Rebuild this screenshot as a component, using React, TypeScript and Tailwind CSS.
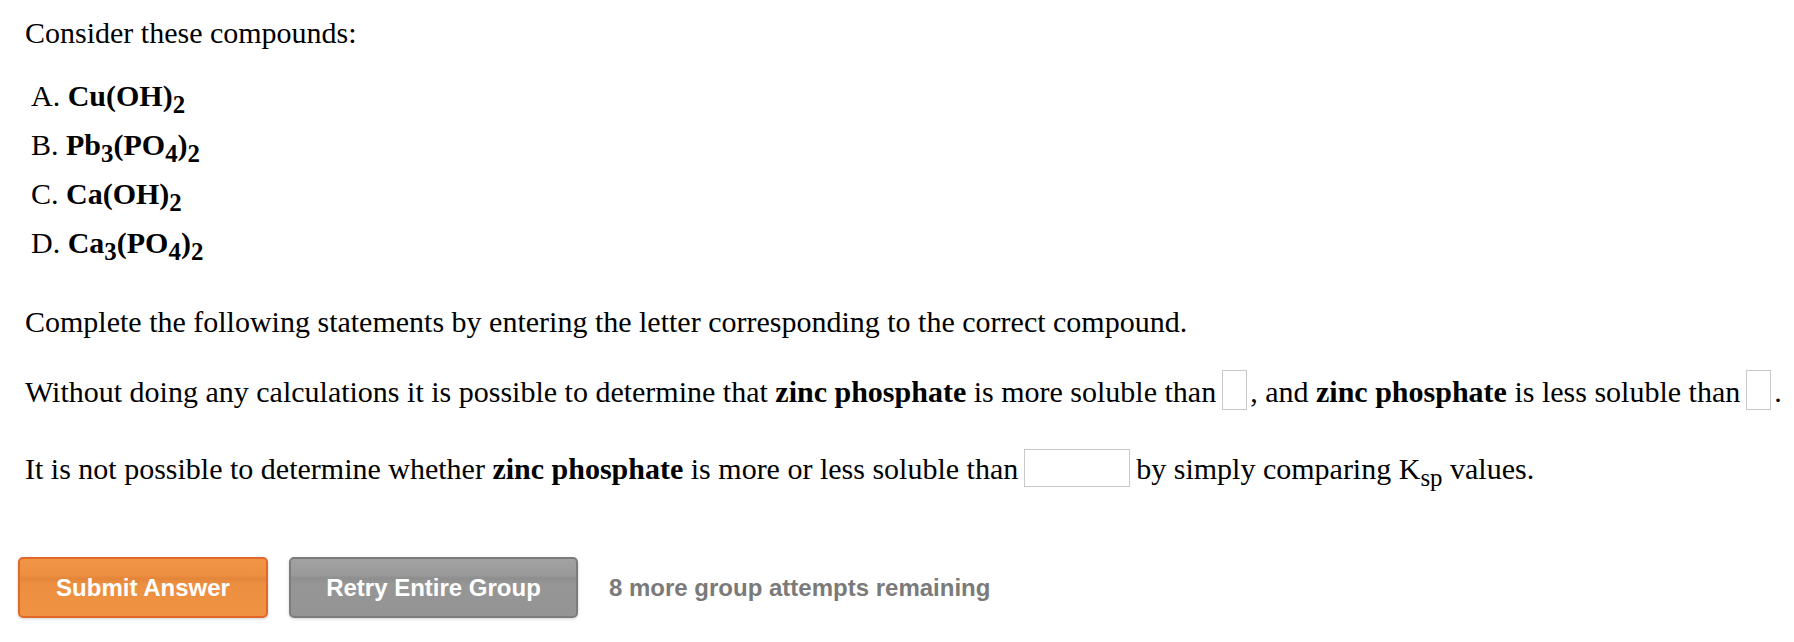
import React from 'react';

// browser-default style subscript (larger and lower than preflight's)
function Sub({ children }: { children: React.ReactNode }) {
  return <sub className="relative -bottom-[0.27em] align-baseline text-[0.83em] leading-none">{children}</sub>;
}

const compounds = [
  { letter: 'A', body: <>Cu(OH)<Sub>2</Sub></> },
  { letter: 'B', body: <>Pb<Sub>3</Sub>(PO<Sub>4</Sub>)<Sub>2</Sub></> },
  { letter: 'C', body: <>Ca(OH)<Sub>2</Sub></> },
  { letter: 'D', body: <>Ca<Sub>3</Sub>(PO<Sub>4</Sub>)<Sub>2</Sub></> },
];

function Blank({ wide }: { wide?: boolean }) {
  return (
    <span
      className={`inline-block align-[-8px] border border-[#c9c9c9] bg-white ${
        wide ? 'w-[106px] h-[38px] ml-[6px] mr-[6px]' : 'w-[25px] h-[40px] ml-[6px] mr-[3px]'
      }`}
    />
  );
}

export default function App() {
  return (
    <div className="min-h-screen bg-white pl-[25px] pt-[16px] text-[30px] text-black font-['Liberation_Serif','Times_New_Roman',serif]">
      <p className="leading-[34px]">Consider these compounds:</p>

      <ol className="mt-[21px] ml-[6px]">
        {compounds.map((c) => (
          <li key={c.letter} className="leading-[49px]">
            {c.letter}. <b>{c.body}</b>
          </li>
        ))}
      </ol>

      <p className="mt-[38px] leading-[34px]">
        Complete the following statements by entering the letter corresponding to the correct compound.
      </p>

      <p className="mt-[31px] leading-[40px] whitespace-nowrap">
        Without doing any calculations it is possible to determine that <b>zinc phosphate</b> is more soluble than
        <Blank />, and <b>zinc phosphate</b> is less soluble than
        <Blank />.
      </p>

      <p className="mt-[37px] leading-[40px] whitespace-nowrap">
        It is not possible to determine whether <b>zinc phosphate</b> is more or less soluble than
        <Blank wide />
        by simply comparing K<Sub>sp</Sub> values.
      </p>

      <div className="mt-[68px] -ml-[7px] flex items-center gap-[21px] font-['Liberation_Sans',Arial,sans-serif] text-[24px] font-bold">
        <button className="h-[61px] w-[250px] rounded-[5px] border-2 border-[#e0682a] bg-[linear-gradient(to_bottom,#f09445_0%,#ee9041_28%,#e3853a_34%,#ec8f40_44%,#ef9242_100%)] text-white shadow-[0_1px_3px_rgba(0,0,0,0.18)]">
          Submit Answer
        </button>
        <button className="h-[61px] w-[289px] rounded-[5px] border-2 border-[#7c7c7c] bg-[linear-gradient(to_bottom,#a2a2a2_0%,#9a9a9a_28%,#8e8e8e_34%,#969696_44%,#949494_100%)] text-white shadow-[0_1px_3px_rgba(0,0,0,0.18)]">
          Retry Entire Group
        </button>
        <span className="ml-[10px] text-[#7a7a7a]">8 more group attempts remaining</span>
      </div>
    </div>
  );
}
